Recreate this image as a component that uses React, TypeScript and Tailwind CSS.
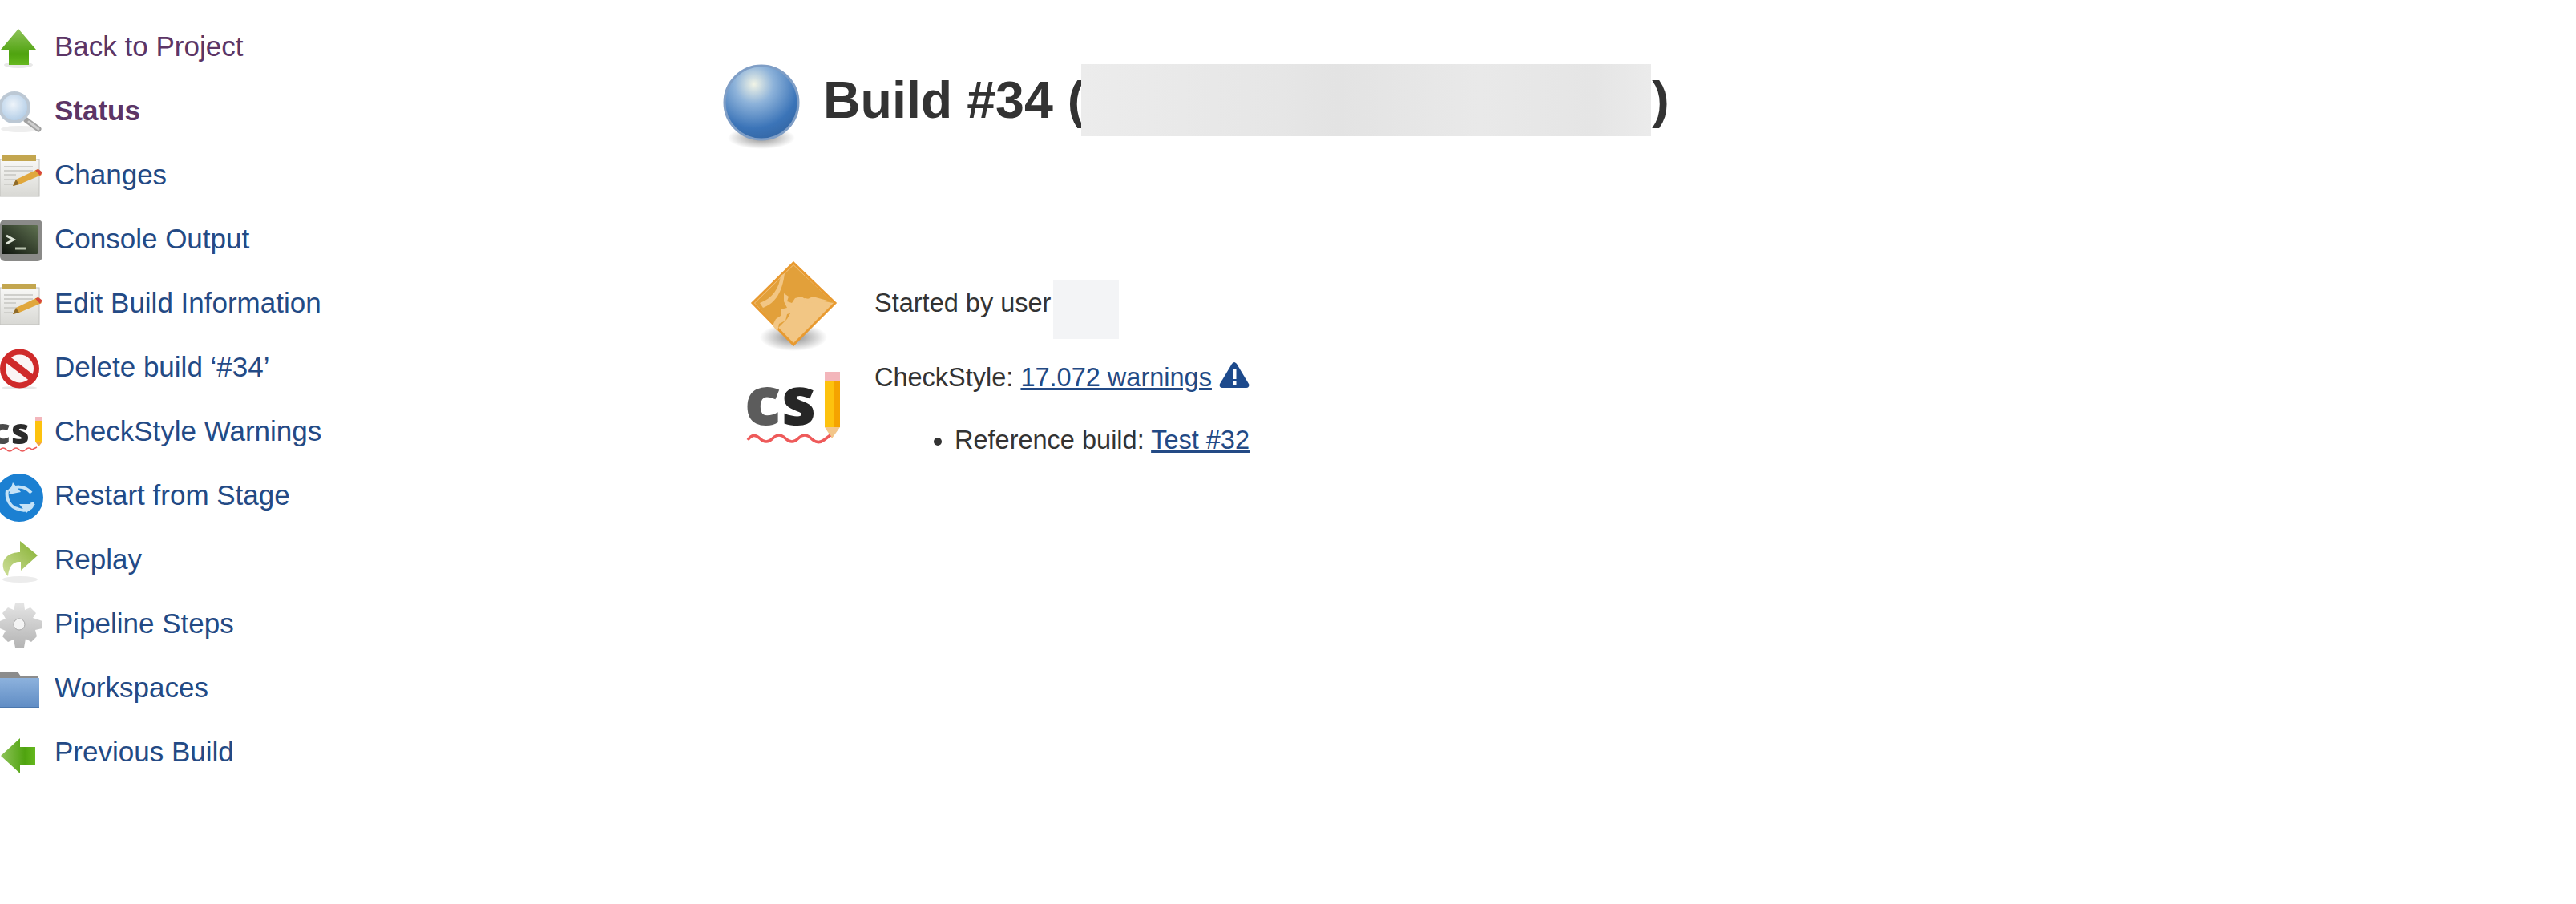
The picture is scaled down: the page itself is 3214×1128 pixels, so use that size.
import React from 'react'

/* Jenkins build page: side task list + build summary */

const ArrowUpIcon = () => (
    <svg width="54" height="54" viewBox="0 0 54 54">
        <defs>
            <linearGradient id="up" x1="0" y1="0" x2="0" y2="1">
                <stop offset="0" stopColor="#8fc35a" />
                <stop offset="0.7" stopColor="#4fa30f" />
                <stop offset="1" stopColor="#66b81f" />
            </linearGradient>
        </defs>
        <ellipse cx="23" cy="50" rx="18" ry="4" fill="#e8e8e8" />
        <path d="M23 5 L45 31 L36 31 L36 50 L11 50 L11 31 L1 31 Z" fill="url(#up)" />
    </svg>
)

const MagnifierIcon = () => (
    <svg width="54" height="54" viewBox="0 0 54 54">
        <defs>
            <radialGradient id="lens" cx="0.45" cy="0.4" r="0.65">
                <stop offset="0" stopColor="#eef4fa" />
                <stop offset="1" stopColor="#abc8e4" />
            </radialGradient>
        </defs>
        <ellipse cx="25" cy="50" rx="24" ry="4" fill="#eeeeee" />
        <path d="M33 39 L48 50" stroke="#a2a2a2" strokeWidth="7" strokeLinecap="round" />
        <path d="M36 41 L48 50" stroke="#cfcfcf" strokeWidth="3" strokeLinecap="round" />
        <circle cx="18" cy="23" r="18" fill="url(#lens)" stroke="#bcc8d4" strokeWidth="4" />
    </svg>
)

const NotepadIcon = ({ id }: { id: string }) => (
    <svg width="54" height="56" viewBox="0 0 54 56">
        <defs>
            <linearGradient id={id} x1="0" y1="0" x2="0" y2="1">
                <stop offset="0" stopColor="#f8f8f6" />
                <stop offset="1" stopColor="#d8d8d4" />
            </linearGradient>
        </defs>
        <rect x="0" y="8" width="49" height="46" fill={`url(#${id})`} stroke="#c0c0bc" />
        <rect x="2" y="3" width="43" height="7" fill="#c3a64f" />
        <path d="M5 17 H41 M5 22 H41 M5 27 H20 M5 33 H36 M5 39 H16" stroke="#cfcfcb" strokeWidth="2" />
        <path d="M16 41 L20 33 L47 20 L52 27 L24 39 Z" fill="#e0a73c" />
        <path d="M44 21.5 L48 20 L53 24 L50 28 Z" fill="#d8483a" />
        <path d="M16 41 L20 33 L24 39 Z" fill="#8d6a2a" />
    </svg>
)

const ConsoleIcon = () => (
    <svg width="54" height="56" viewBox="0 0 54 56">
        <defs>
            <linearGradient id="screen" x1="0" y1="1" x2="1" y2="0">
                <stop offset="0" stopColor="#0f140d" />
                <stop offset="1" stopColor="#5e7050" />
            </linearGradient>
        </defs>
        <rect x="0" y="3" width="53" height="52" rx="6" fill="#8a8a88" />
        <rect x="2" y="10" width="45" height="36" rx="1" fill="url(#screen)" />
        <path d="M8 23 L17 28 L8 33" fill="none" stroke="#dfe5d8" strokeWidth="3" />
        <path d="M19 39 H32" stroke="#b8c2ae" strokeWidth="3" />
    </svg>
)

const DeleteIcon = () => (
    <svg width="54" height="56" viewBox="0 0 54 56">
        <ellipse cx="24" cy="53" rx="22" ry="2" fill="#e8e8e8" />
        <circle cx="24.5" cy="29" r="21" fill="#fbf4f4" stroke="#cf2a2a" strokeWidth="7" />
        <path d="M9 17 L40 41" stroke="#cf2a2a" strokeWidth="9" />
    </svg>
)

const CheckStyleSmallIcon = () => (
    <svg width="54" height="56" viewBox="0 0 54 56">
        <text x="-11" y="43" fontFamily="'Open Sans', sans-serif" fontWeight="800" fontSize="44" fill="#4a4a4a">c</text>
        <text x="14" y="43" fontFamily="'Open Sans', sans-serif" fontWeight="800" fontSize="44" fill="#2b2b2b">s</text>
        <rect x="44" y="9" width="9" height="5" fill="#f3b6bb" />
        <rect x="44" y="14" width="9" height="26" fill="#fdc20e" />
        <path d="M44 40 L48.5 46 L53 40 Z" fill="#f3a640" />
        <path d="M0 50 Q4 46 8 50 T16 50 T24 50 T32 50 T40 50 L46 47" fill="none" stroke="#ec5b5b" strokeWidth="1.6" />
    </svg>
)

const RestartIcon = () => (
    <svg width="54" height="62" viewBox="0 0 54 62">
        <circle cx="24" cy="30" r="30" fill="#1b80d2" />
        <path d="M11 22 C17 15 30 14 39 24" fill="none" stroke="#c5e3f7" strokeWidth="4" />
        <path d="M9 21 C7 32 13 42 22 44" fill="none" stroke="#c5e3f7" strokeWidth="4" />
        <path d="M16 11 L26 23 L11 26 Z" fill="#c5e3f7" />
        <path d="M40 36 C42 44 32 48 22 44" fill="none" stroke="#c5e3f7" strokeWidth="4" />
        <path d="M33 49 L24 38 L44 38 Z" fill="#c5e3f7" />
    </svg>
)

const ReplayIcon = () => (
    <svg width="54" height="58" viewBox="0 0 54 58">
        <defs>
            <linearGradient id="replay" x1="0" y1="1" x2="1" y2="0">
                <stop offset="0" stopColor="#cfdf9a" />
                <stop offset="1" stopColor="#84b030" />
            </linearGradient>
        </defs>
        <ellipse cx="25" cy="52" rx="22" ry="4" fill="#ececec" />
        <path d="M25 4 L47 22 L26 41 L26 30 C16 29 11 36 10 48 C3 42 1 30 8 24 C12 20 19 18 25 18 Z" fill="url(#replay)" />
    </svg>
)

const GearIcon = () => (
    <svg width="54" height="60" viewBox="0 0 54 60">
        <defs>
            <linearGradient id="gear" x1="0" y1="0" x2="0" y2="1">
                <stop offset="0" stopColor="#e4e4e4" />
                <stop offset="1" stopColor="#b4b4b4" />
            </linearGradient>
        </defs>
        <path
            d="M19 2 H30 L31 10 L38 7 L45 14 L41 20 L53 24 V33 L44 35 L46 43 L39 50 L32 46 L30 57 H19 L17 47 L10 50 L3 43 L7 36 L0 33 V24 L7 21 L3 14 L10 7 L17 10 Z"
            fill="url(#gear)"
        />
        <circle cx="24" cy="28" r="7" fill="#f4f4f4" stroke="#a8a8a8" />
    </svg>
)

const FolderIcon = () => (
    <svg width="54" height="56" viewBox="0 0 54 56">
        <defs>
            <linearGradient id="folder" x1="0" y1="0" x2="0" y2="1">
                <stop offset="0" stopColor="#8db2dd" />
                <stop offset="1" stopColor="#5f8cc4" />
            </linearGradient>
        </defs>
        <path d="M0 7 H22 L26 13 H48 V20 H0 Z" fill="#8c8c8c" />
        <rect x="0" y="15" width="49" height="37" fill="url(#folder)" />
        <path d="M0 52 H49" stroke="#4b77ad" strokeWidth="2" />
    </svg>
)

const ArrowLeftIcon = () => (
    <svg width="54" height="56" viewBox="0 0 54 56">
        <defs>
            <linearGradient id="left" x1="0" y1="0" x2="1" y2="0">
                <stop offset="0" stopColor="#8fc35a" />
                <stop offset="0.7" stopColor="#4fa30f" />
                <stop offset="1" stopColor="#66b81f" />
            </linearGradient>
        </defs>
        <path d="M1 32 L25 10 L25 21 L44 21 L44 44 L25 44 L25 54 Z" fill="url(#left)" />
    </svg>
)

const BallIcon = () => (
    <svg width="100" height="108" viewBox="0 0 100 108" className="shrink-0 blur-[0.5px]">
        <defs>
            <radialGradient id="ball" cx="0.4" cy="0.25" r="0.75">
                <stop offset="0" stopColor="#f1f4e6" />
                <stop offset="0.35" stopColor="#8eb3da" />
                <stop offset="0.8" stopColor="#3b74b8" />
                <stop offset="1" stopColor="#3569a8" />
            </radialGradient>
            <radialGradient id="ballshadow" cx="0.5" cy="0.5" r="0.5">
                <stop offset="0" stopColor="#8f8f8f" />
                <stop offset="1" stopColor="#ffffff" />
            </radialGradient>
        </defs>
        <ellipse cx="50" cy="94" rx="42" ry="14" fill="url(#ballshadow)" />
        <circle cx="50" cy="50" r="46" fill="url(#ball)" stroke="#7f9ec6" strokeWidth="3" />
    </svg>
)

const DiamondIcon = () => (
    <svg width="117" height="114" viewBox="0 0 117 114" className="blur-[0.5px]">
        <defs>
            <radialGradient id="diamondshadow" cx="0.5" cy="0.5" r="0.5">
                <stop offset="0" stopColor="#8a8a8a" />
                <stop offset="1" stopColor="#ffffff" />
            </radialGradient>
        </defs>
        <ellipse cx="58" cy="95" rx="42" ry="17" fill="url(#diamondshadow)" />
        <path d="M58 2 L110 52 L58 104 L7 52 Z" fill="#f2c684" stroke="#e89a30" strokeWidth="3" />
        <path d="M58 5 L108 52 L72 46 L58 58 L50 72 L38 84 L10 52 Z" fill="#e2a03a" />
        <path
            d="M42 18 C40 34 32 46 16 52 L20 58 C36 52 44 38 47 15 Z M46 40 L52 44 L50 50 L56 52 L60 46 L68 44 L74 48 L82 44 L104 50 L72 52 L62 56 L56 64 L50 66 L48 74 L40 78 L38 88 L32 80 L36 72 L42 68 L42 60 L50 58 L46 50 Z"
            fill="#f2c684"
        />
    </svg>
)

const CheckStyleLogo = () => (
    <svg width="117" height="94" viewBox="0 0 117 94" className="blur-[0.5px] overflow-visible">
        <text x="-2" y="67" fontFamily="'Open Sans', sans-serif" fontWeight="800" fontSize="84" fill="#5c5c5c">c</text>
        <text x="44" y="67" fontFamily="'Open Sans', sans-serif" fontWeight="800" fontSize="84" fill="#262626">s</text>
        <rect x="98" y="1" width="19" height="11" fill="#f3b6bb" />
        <rect x="98" y="12" width="19" height="58" fill="#fdc20e" />
        <rect x="110" y="12" width="7" height="58" fill="#f5a300" />
        <path d="M98 70 L107 84 L117 70 Z" fill="#f3c68a" />
        <path d="M2 86 Q9 76 17 84 T33 84 T49 84 T65 84 T81 84 T97 86 L105 80" fill="none" stroke="#ee5a5a" strokeWidth="3.5" />
    </svg>
)

const WarningIcon = () => (
    <svg width="38" height="33" viewBox="0 0 38 33" className="inline-block ml-[9px] align-[-2px]">
        <path d="M19 1 C20 1 21 2 22 3 L37 28 C38 30 37 33 34 33 H4 C1 33 0 30 1 28 L16 3 C17 2 18 1 19 1 Z" fill="#1d4a8c" />
        <rect x="17" y="10" width="4.5" height="12" fill="#ffffff" />
        <rect x="17" y="25" width="4.5" height="4.5" fill="#ffffff" />
    </svg>
)

const tasks = [
    { label: 'Back to Project', icon: <ArrowUpIcon />, style: 'text-[#5c3566]' },
    { label: 'Status', icon: <MagnifierIcon />, style: 'text-[#5c3566] font-bold' },
    { label: 'Changes', icon: <NotepadIcon id="note1" />, style: 'text-[#234a85]' },
    { label: 'Console Output', icon: <ConsoleIcon />, style: 'text-[#234a85]' },
    { label: 'Edit Build Information', icon: <NotepadIcon id="note2" />, style: 'text-[#234a85]' },
    { label: 'Delete build ‘#34’', icon: <DeleteIcon />, style: 'text-[#234a85]' },
    { label: 'CheckStyle Warnings', icon: <CheckStyleSmallIcon />, style: 'text-[#234a85]' },
    { label: 'Restart from Stage', icon: <RestartIcon />, style: 'text-[#234a85]' },
    { label: 'Replay', icon: <ReplayIcon />, style: 'text-[#234a85]' },
    { label: 'Pipeline Steps', icon: <GearIcon />, style: 'text-[#234a85]' },
    { label: 'Workspaces', icon: <FolderIcon />, style: 'text-[#234a85]' },
    { label: 'Previous Build', icon: <ArrowLeftIcon />, style: 'text-[#234a85]' },
]

export default function App() {
    return (
        <div className="flex h-[1128px] bg-white font-['Liberation_Sans',Arial,sans-serif] text-[#333333] overflow-hidden">
            {/* Side panel */}
            <div className="w-[900px] shrink-0 pt-[18px]">
                {tasks.map((task) => (
                    <div key={task.label} className="flex items-center h-[80px]">
                        <div className="w-[68px] shrink-0 h-[54px] blur-[0.5px]">{task.icon}</div>
                        <span className={`text-[35px] leading-[40px] ${task.style}`}>{task.label}</span>
                    </div>
                ))}
            </div>

            {/* Build summary */}
            <div className="flex-1 pt-[78px]">
                <div className="flex items-start h-[248px]">
                    <div className="mr-[27px]"><BallIcon /></div>
                    <h1 className="text-[64.5px] leading-[90px] pt-[2px] font-bold whitespace-nowrap">
                        Build #34 (
                        <span className="inline-block align-top -ml-[4px] mr-[1px] w-[711px] h-[90px] bg-[linear-gradient(90deg,#ececec,#e6e6e6_35%,#e3e3e3_45%,#e9e9e9_70%,#e5e5e5_90%,#ebebeb)]" />
                        )
                    </h1>
                </div>

                <div className="flex h-[125px]">
                    <div className="w-[191px] shrink-0 pl-[32px]"><DiamondIcon /></div>
                    <div className="flex items-start pt-[34px] text-[32.5px] leading-[37px]">
                        <span>Started by user</span>
                        <span className="w-[82px] h-[73px] -mt-[10px] ml-[3px] bg-[#f3f4f6]" />
                    </div>
                </div>

                <div className="flex">
                    <div className="w-[191px] shrink-0 pl-[31px] pt-[12px]"><CheckStyleLogo /></div>
                    <div className="text-[32.5px] leading-[37px]">
                        <div className="whitespace-nowrap">
                            CheckStyle: <a className="text-[#234a85] underline">17.072 warnings</a>
                            <WarningIcon />
                        </div>
                        <ul className="list-disc pl-[100px] mt-[41px] whitespace-nowrap">
                            <li>
                                Reference build: <a className="text-[#234a85] underline">Test #32</a>
                            </li>
                        </ul>
                    </div>
                </div>
            </div>
        </div>
    )
}
